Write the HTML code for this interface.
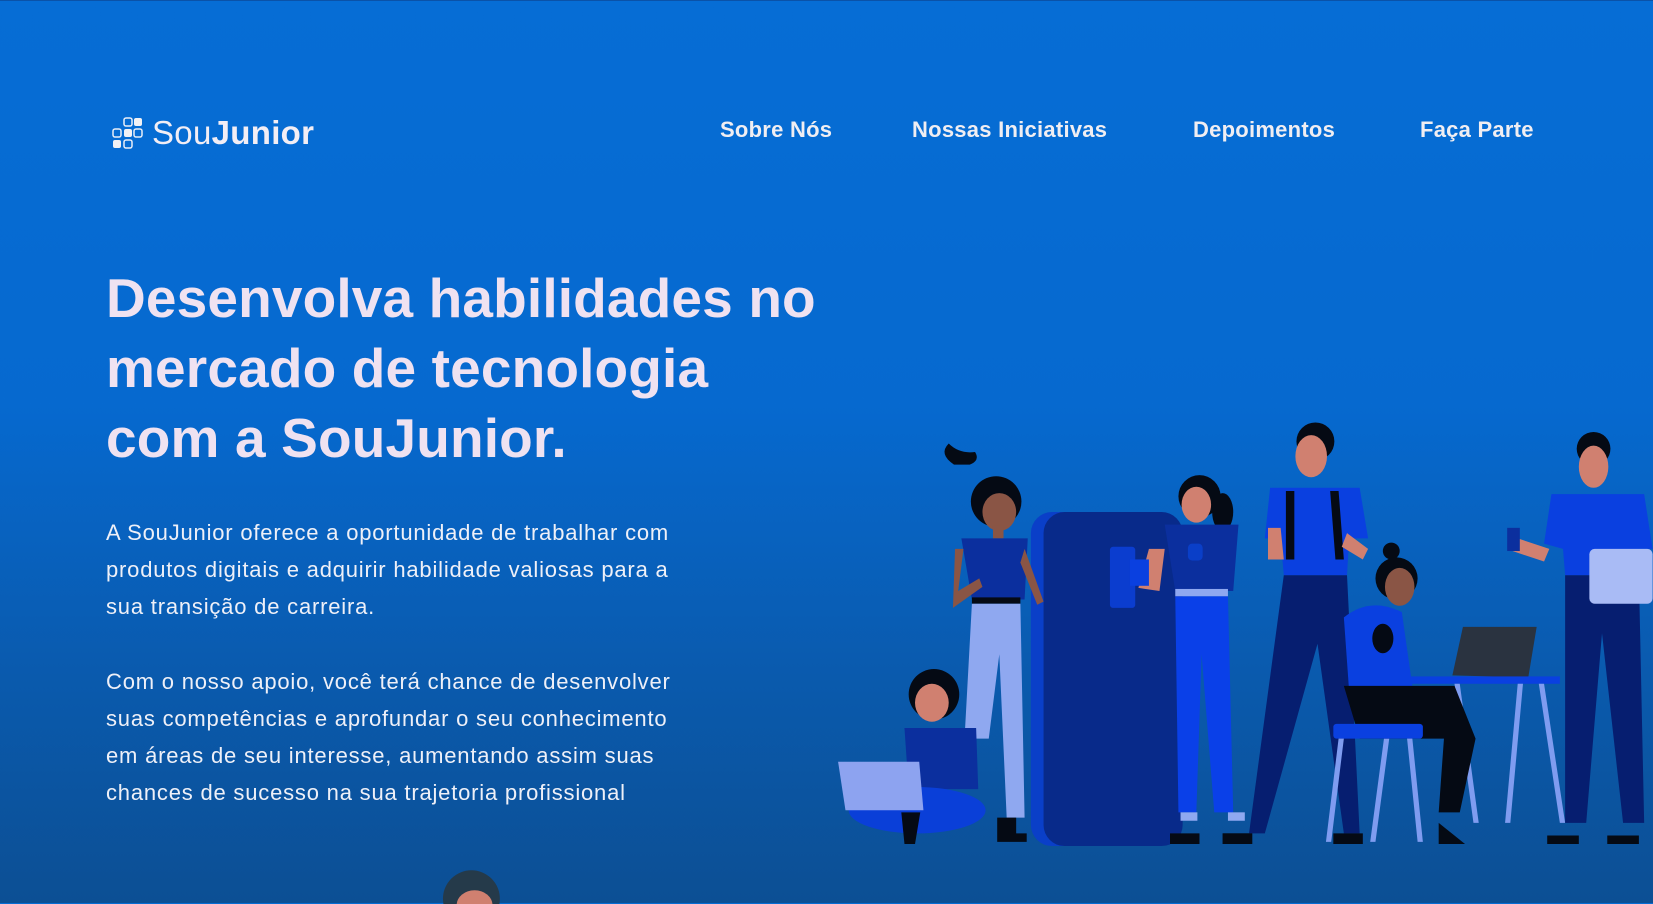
<!DOCTYPE html>
<html><head><meta charset="utf-8"><style>
html,body{margin:0;padding:0}
body{width:1653px;height:903px;overflow:hidden;position:relative;font-family:"Liberation Sans","DejaVu Sans",sans-serif;background:linear-gradient(180deg,#066dd5 0%,#0669cf 45%,#0a5aad 75%,#0c4f94 100%);border-top:1px solid #0a52a8;box-sizing:border-box}
.logo{position:absolute;left:112px;top:113px;display:flex;align-items:center}
.logo span{color:#f2eef5;font-size:33px;margin-left:8px;letter-spacing:0.3px}
.logo b{font-weight:bold}
nav a{position:absolute;top:116px;color:#f0eef2;font-weight:bold;font-size:22px;letter-spacing:0.25px;text-decoration:none;white-space:nowrap}
h1{position:absolute;left:106px;top:262px;margin:0;color:#efe2f1;font-size:55px;line-height:70px;font-weight:bold;letter-spacing:0.15px}
p{position:absolute;left:106px;margin:0;color:#eef0f8;font-size:22px;letter-spacing:0.8px;line-height:37px;white-space:nowrap}
svg.ill{position:absolute;left:0;top:0}
</style></head><body>
<div class="logo">
<svg width="32" height="32" viewBox="0 0 32 32">
<rect x="12" y="1" width="8" height="8" rx="2" fill="none" stroke="#e8eef8" stroke-width="1.5"/>
<rect x="22" y="1" width="8" height="8" rx="2" fill="#f2f2f5"/>
<rect x="1" y="12" width="8" height="8" rx="2" fill="none" stroke="#e8eef8" stroke-width="1.5"/>
<rect x="12" y="12" width="8" height="8" rx="2" fill="#f2f2f5"/>
<rect x="22" y="12" width="8" height="8" rx="2" fill="none" stroke="#e8eef8" stroke-width="1.5"/>
<rect x="1" y="23" width="8" height="8" rx="2" fill="#f2f2f5"/>
<rect x="12" y="23" width="8" height="8" rx="2" fill="none" stroke="#e8eef8" stroke-width="1.5"/>
</svg>
<span>Sou<b>Junior</b></span></div>
<nav>
<a style="left:720px">Sobre Nós</a>
<a style="left:912px">Nossas Iniciativas</a>
<a style="left:1193px">Depoimentos</a>
<a style="left:1420px">Faça Parte</a>
</nav>
<h1>Desenvolva habilidades no<br>mercado de tecnologia<br>com a SouJunior.</h1>
<p style="top:513px">A SouJunior oferece a oportunidade de trabalhar com<br>produtos digitais e adquirir habilidade valiosas para a<br>sua transição de carreira.</p>
<p style="top:662px">Com o nosso apoio, você terá chance de desenvolver<br>suas competências e aprofundar o seu conhecimento<br>em áreas de seu interesse, aumentando assim suas<br>chances de sucesso na sua trajetoria profissional</p>
<svg class="ill" width="1653" height="903" viewBox="0 0 1568 857">
<circle cx="447" cy="852" r="27" fill="#253a4a"/>
<ellipse cx="450" cy="858" rx="17" ry="14" fill="#d08070"/>
<rect x="978" y="485" width="140" height="317" rx="20" fill="#0a3fc8"/>
<rect x="990" y="485" width="132" height="317" rx="20" fill="#082a8a"/>
<rect x="1053" y="518" width="24" height="58" rx="3" fill="#0b3dcf"/>
<path d="M905 440 q-15 -10 -5 -20 q10 10 25 8 q5 8 -5 12z" fill="#050a14"/>
<circle cx="945" cy="475" r="24" fill="#050a14"/>
<ellipse cx="948" cy="485" rx="16" ry="18" fill="#8a5545"/>
<rect x="942" y="498" width="10" height="12" fill="#8a5545"/>
<path d="M912 510 L975 510 L972 568 L922 568z" fill="#0b2f9e"/>
<path d="M906 520 l8 0 l-5 40 l20 -12 l3 8 l-28 20z" fill="#8a5545"/>
<path d="M972 520 l18 50 l-6 3 l-16 -40z" fill="#8a5545"/>
<rect x="922" y="566" width="46" height="6" fill="#050a14"/>
<path d="M922 572 L968 572 L972 775 L955 775 L948 620 L938 700 L915 700z" fill="#8fa8f0"/>
<path d="M946 775 h18 v15 h10 v8 h-28z" fill="#050a14"/>
<circle cx="886" cy="658" r="24" fill="#050a14"/>
<ellipse cx="884" cy="666" rx="16" ry="18" fill="#d08070"/>
<path d="M858 690 L926 690 L928 748 L862 748z" fill="#0b2f9e"/>
<ellipse cx="870" cy="768" rx="65" ry="22" fill="#0a3fd8"/>
<path d="M795 722 L872 722 L876 768 L802 768z" fill="#8da3f0"/>
<path d="M855 770 h18 l-5 30 h-10z" fill="#050a14"/>
<circle cx="1138" cy="470" r="20" fill="#050a14"/>
<ellipse cx="1160" cy="485" rx="10" ry="18" fill="#050a14"/>
<ellipse cx="1135" cy="478" rx="14" ry="17" fill="#d08070"/>
<path d="M1105 497 L1175 497 L1170 560 L1115 560z" fill="#0b2f9e"/>
<rect x="1127" y="515" width="14" height="16" rx="4" fill="#0a3fc8"/>
<rect x="1115" y="558" width="50" height="7" fill="#8fa8f0"/>
<path d="M1115 565 L1165 565 L1170 770 L1152 770 L1140 620 L1135 770 L1118 770z" fill="#0a40e8"/>
<path d="M1090 520 l15 0 l-5 40 l-20 -3z" fill="#d08070"/>
<rect x="1072" y="530" width="18" height="25" fill="#0a40e0"/>
<path d="M1110 790 h28 v10 h-28z M1160 790 h28 v10 h-28z" fill="#050a14"/>
<rect x="1120" y="770" width="16" height="8" fill="#8fa8f0"/>
<rect x="1165" y="770" width="16" height="8" fill="#8fa8f0"/>
<circle cx="1248" cy="418" r="18" fill="#050a14"/>
<ellipse cx="1244" cy="432" rx="15" ry="20" fill="#d08070"/>
<path d="M1205 462 L1290 462 L1298 510 L1280 510 L1278 545 L1218 545 L1215 510 L1200 510z" fill="#0a40e0"/>
<path d="M1220 465 l8 0 l0 65 l-8 0z M1262 465 l8 0 l5 65 l-8 0z" fill="#050a14"/>
<path d="M1203 500 l12 0 l3 30 l-15 0z M1278 505 l20 15 l-5 10 l-20 -12z" fill="#d08070"/>
<path d="M1218 545 L1278 545 L1290 790 L1275 790 L1250 610 L1200 790 L1185 790z" fill="#061e70"/>
<path d="M1160 790 h28 v10 h-28z M1265 790 h28 v10 h-28z" fill="#050a14"/>
<path d="M1378 640 L1388 594 L1458 594 L1450 642z" fill="#2a3340"/>
<rect x="1300" y="641" width="180" height="7" fill="#0a40e0"/>
<path d="M1320 648 l5 0 l-20 150 l-5 0z M1380 648 l5 0 l18 132 l-5 0z M1440 648 l5 0 l-12 132 l-5 0z M1460 648 l5 0 l20 132 l-5 0z" fill="#7f9cf0"/>
<circle cx="1320" cy="522" r="8" fill="#050a14"/>
<circle cx="1325" cy="548" r="20" fill="#050a14"/>
<ellipse cx="1328" cy="556" rx="14" ry="18" fill="#8a5545"/>
<path d="M1275 585 Q1300 565 1330 580 L1340 650 L1280 655z" fill="#0a40e0"/>
<ellipse cx="1312" cy="605" rx="10" ry="14" fill="#050a14"/>
<path d="M1275 650 L1380 650 L1400 700 L1385 770 L1365 770 L1370 700 L1290 700z" fill="#050a14"/>
<rect x="1265" y="686" width="85" height="14" rx="3" fill="#0a40e0"/>
<path d="M1270 700 l5 0 l-12 98 l-5 0z M1335 700 l5 0 l10 98 l-5 0z" fill="#7f9cf0"/>
<path d="M1365 780 l25 20 l-25 0z" fill="#050a14"/>
<circle cx="1512" cy="425" r="16" fill="#050a14"/>
<ellipse cx="1512" cy="442" rx="14" ry="20" fill="#d08070"/>
<path d="M1472 468 L1560 468 L1568 520 L1555 520 L1555 545 L1485 545 L1483 520 L1465 515z" fill="#0a40e0"/>
<path d="M1440 510 l30 10 l-5 12 l-30 -10z" fill="#d08070"/>
<rect x="1430" y="500" width="12" height="22" fill="#0b2f9e"/>
<path d="M1485 545 L1555 545 L1560 780 L1540 780 L1520 600 L1505 780 L1485 780z" fill="#061e70"/>
<rect x="1508" y="520" width="60" height="52" rx="5" fill="#a9bbf5"/>
<path d="M1468 792 h30 v8 h-30z M1525 792 h30 v8 h-30z" fill="#050a14"/>
</svg>
</body></html>
